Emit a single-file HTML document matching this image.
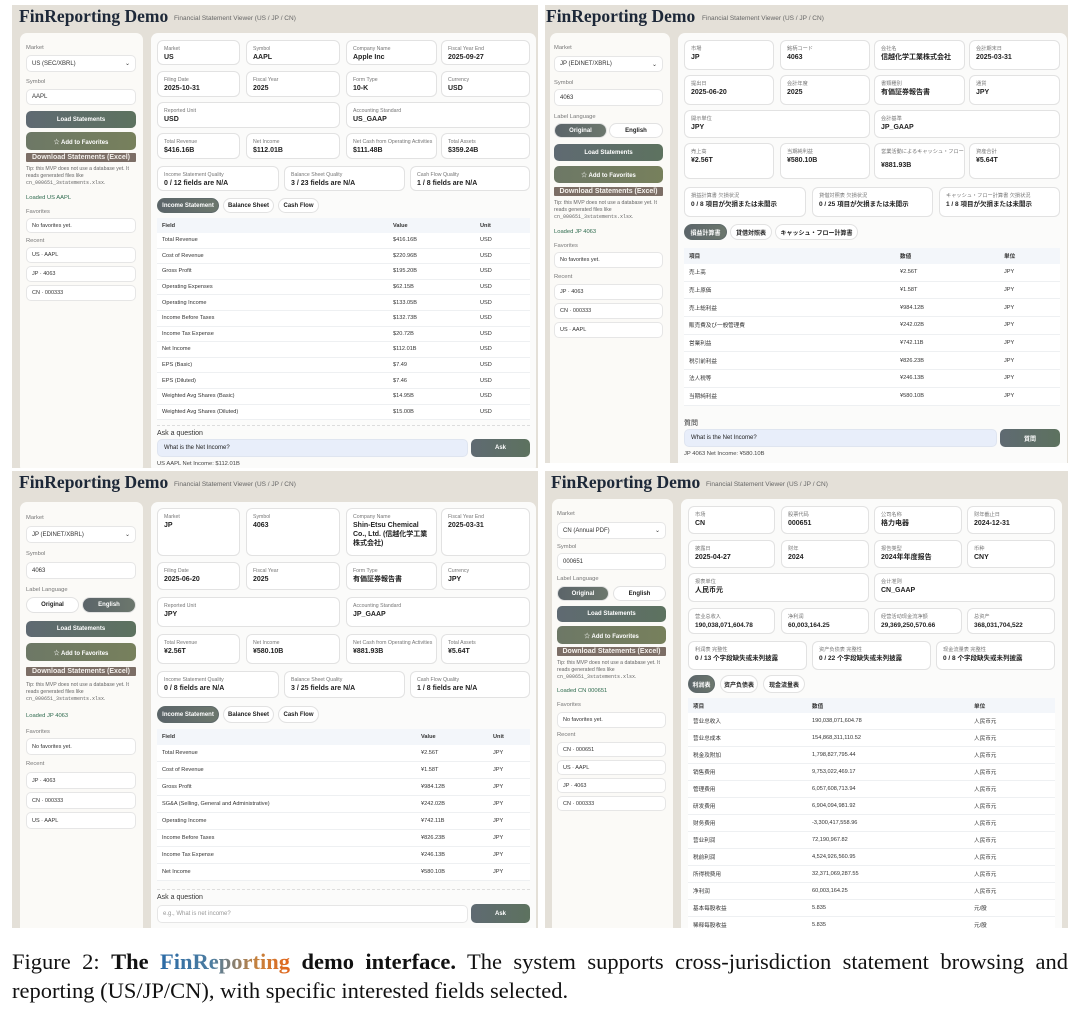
<!DOCTYPE html>
<html><head><meta charset="utf-8"><style>
*{box-sizing:border-box;margin:0;padding:0}
body{width:1080px;height:1010px;background:#fff;position:relative;overflow:hidden;font-family:"Liberation Sans","Noto Sans CJK JP",sans-serif;color:#222}
.w{position:absolute;left:0;top:0;width:1080px;height:1010px}
.w div,.w span.a{position:absolute}
.bg{background:#e4e0d8}
.ti{font-family:"Liberation Serif",serif;font-weight:bold;font-size:17.5px;color:#1d2838;white-space:nowrap}
.st{font-size:6.5px;color:#666;white-space:nowrap}
.sb{background:#fbfaf7;border-radius:7px}
.mn{background:#fbfbfa;border-radius:7px}
.lb{font-size:5.8px;color:#777;white-space:nowrap}
.in{background:#fff;border:1px solid #e6e6e6;border-radius:5px;font-size:6px;padding-left:5px;display:flex;align-items:center;color:#333}
.btn{border-radius:5px;color:#fff;font-weight:bold;font-size:6px;display:flex;align-items:center;justify-content:center;background:linear-gradient(90deg,#5f6a72,#5d725f)}
.fav{background:linear-gradient(90deg,#6d7866,#77805c)}
.dl{background:#7c6e66;color:#f4f0ec;font-weight:bold;font-size:7px;display:flex;align-items:center;justify-content:center;border-radius:1px}
.tip{font-size:5.2px;color:#666;line-height:7px}
.tip code{font-family:"Liberation Mono",monospace;font-size:5px}
.ok{font-size:5.8px;color:#2f6b4f;white-space:nowrap}
.c{background:#fff;border:1px solid #e2e2e2;border-radius:6px;padding:4px 6px}
.c i{display:block;font-style:normal;font-size:5.2px;color:#777;line-height:8px;white-space:nowrap}
.c b{display:block;font-size:7px;color:#222;line-height:9px}
.tab{border:1px solid #e2e2e2;border-radius:9px;background:#fff;font-size:6px;font-weight:bold;display:flex;align-items:center;justify-content:center;white-space:nowrap}
.tab.on{background:linear-gradient(90deg,#5b6469,#6c776d);color:#fff;border-color:#5f6a6a}
.tg{border:1px solid #e2e2e2;border-radius:9px;background:#fff;font-size:6px;font-weight:bold;display:flex;align-items:center;justify-content:center}
.tg.on{background:linear-gradient(90deg,#5b6469,#6c776d);color:#fff}
.tb .r{position:relative!important;display:grid;border-bottom:1px solid #eef0f2;font-size:5.6px;color:#333;align-items:center;padding-left:5px;background:#fff}
.tb .h{background:#f3f6fa;font-weight:bold;border-bottom:none}
.ask{background:#e8eefa;border:1px solid #dfe5f0;border-radius:5px;font-size:6px;padding-left:6px;display:flex;align-items:center}
.cap{font-family:"Liberation Serif",serif;font-size:22.5px;color:#111;line-height:29px;position:absolute;left:12px;width:1056px;white-space:nowrap}
.j{text-align:justify;text-align-last:justify;white-space:normal}
.fr{font-weight:bold;background:linear-gradient(90deg,#2a6aa6 0%,#4d7da0 40%,#c7813c 75%,#e2661c 100%);-webkit-background-clip:text;background-clip:text;color:transparent}
</style></head><body>

<!-- ============ TOP LEFT (US) ============ -->
<div class="w" style="clip-path:inset(5px 542px 542px 12px)">
<div class="bg" style="left:12px;top:5px;width:526px;height:463px"></div>
<div class="ti" style="left:19px;top:6px">FinReporting Demo</div>
<div class="st" style="left:174px;top:15px">Financial Statement Viewer (US / JP / CN)</div>
<div class="sb" style="left:20px;top:33px;width:123px;height:440px"></div>
<div class="lb" style="left:26px;top:45px">Market</div>
<div class="in" style="left:26px;top:55px;width:110px;height:17px">US (SEC/XBRL)<span style="position:absolute;right:5px;font-size:6px">&#8964;</span></div>
<div class="lb" style="left:26px;top:79px">Symbol</div>
<div class="in" style="left:26px;top:89px;width:110px;height:16px">AAPL</div>
<div class="btn" style="left:26px;top:111px;width:110px;height:17px">Load Statements</div>
<div class="btn fav" style="left:26px;top:132px;width:110px;height:18px">☆ Add to Favorites</div>
<div class="dl" style="left:26px;top:153px;width:110px;height:9px">Download Statements (Excel)</div>
<div class="tip" style="left:26px;top:166px;width:112px">Tip: this MVP does not use a database yet. It reads generated files like <code>cn_000651_3statements.xlsx</code>.</div>
<div class="ok" style="left:26px;top:195px">Loaded US AAPL</div>
<div class="lb" style="left:26px;top:209px">Favorites</div>
<div class="in" style="left:26px;top:218px;width:110px;height:15px;font-size:5.5px">No favorites yet.</div>
<div class="lb" style="left:26px;top:238px">Recent</div>
<div class="in" style="left:26px;top:247px;width:110px;height:16px;font-size:5.5px">US · AAPL</div>
<div class="in" style="left:26px;top:266px;width:110px;height:16px;font-size:5.5px">JP · 4063</div>
<div class="in" style="left:26px;top:285px;width:110px;height:16px;font-size:5.5px">CN · 000333</div>

<div class="mn" style="left:151px;top:33px;width:385px;height:440px"></div>
<div class="c" style="left:157px;top:40px;width:83px;height:25px"><i>Market</i><b>US</b></div>
<div class="c" style="left:246px;top:40px;width:94px;height:25px"><i>Symbol</i><b>AAPL</b></div>
<div class="c" style="left:346px;top:40px;width:91px;height:25px"><i>Company Name</i><b>Apple Inc</b></div>
<div class="c" style="left:441px;top:40px;width:89px;height:25px"><i>Fiscal Year End</i><b>2025-09-27</b></div>
<div class="c" style="left:157px;top:71px;width:83px;height:26px"><i>Filing Date</i><b>2025-10-31</b></div>
<div class="c" style="left:246px;top:71px;width:94px;height:26px"><i>Fiscal Year</i><b>2025</b></div>
<div class="c" style="left:346px;top:71px;width:91px;height:26px"><i>Form Type</i><b>10-K</b></div>
<div class="c" style="left:441px;top:71px;width:89px;height:26px"><i>Currency</i><b>USD</b></div>
<div class="c" style="left:157px;top:102px;width:183px;height:26px"><i>Reported Unit</i><b>USD</b></div>
<div class="c" style="left:346px;top:102px;width:184px;height:26px"><i>Accounting Standard</i><b>US_GAAP</b></div>
<div class="c" style="left:157px;top:133px;width:83px;height:26px"><i>Total Revenue</i><b>$416.16B</b></div>
<div class="c" style="left:246px;top:133px;width:94px;height:26px"><i>Net Income</i><b>$112.01B</b></div>
<div class="c" style="left:346px;top:133px;width:91px;height:26px"><i>Net Cash from Operating Activities</i><b>$111.48B</b></div>
<div class="c" style="left:441px;top:133px;width:89px;height:26px"><i>Total Assets</i><b>$359.24B</b></div>
<div class="c" style="left:157px;top:166px;width:122px;height:25px"><i>Income Statement Quality</i><b>0 / 12 fields are N/A</b></div>
<div class="c" style="left:284px;top:166px;width:121px;height:25px"><i>Balance Sheet Quality</i><b>3 / 23 fields are N/A</b></div>
<div class="c" style="left:410px;top:166px;width:120px;height:25px"><i>Cash Flow Quality</i><b>1 / 8 fields are N/A</b></div>
<div class="tab on" style="left:157px;top:198px;width:62px;height:15px">Income Statement</div>
<div class="tab" style="left:223px;top:198px;width:51px;height:15px">Balance Sheet</div>
<div class="tab" style="left:278px;top:198px;width:41px;height:15px">Cash Flow</div>
<div class="tb" style="left:157px;top:218px;width:373px">
<div class="r h" style="grid-template-columns:231px 87px 1fr;height:15px"><span>Field</span><span>Value</span><span>Unit</span></div>
<div class="r" style="grid-template-columns:231px 87px 1fr;height:15.6px"><span>Total Revenue</span><span>$416.16B</span><span>USD</span></div>
<div class="r" style="grid-template-columns:231px 87px 1fr;height:15.6px"><span>Cost of Revenue</span><span>$220.96B</span><span>USD</span></div>
<div class="r" style="grid-template-columns:231px 87px 1fr;height:15.6px"><span>Gross Profit</span><span>$195.20B</span><span>USD</span></div>
<div class="r" style="grid-template-columns:231px 87px 1fr;height:15.6px"><span>Operating Expenses</span><span>$62.15B</span><span>USD</span></div>
<div class="r" style="grid-template-columns:231px 87px 1fr;height:15.6px"><span>Operating Income</span><span>$133.05B</span><span>USD</span></div>
<div class="r" style="grid-template-columns:231px 87px 1fr;height:15.6px"><span>Income Before Taxes</span><span>$132.73B</span><span>USD</span></div>
<div class="r" style="grid-template-columns:231px 87px 1fr;height:15.6px"><span>Income Tax Expense</span><span>$20.72B</span><span>USD</span></div>
<div class="r" style="grid-template-columns:231px 87px 1fr;height:15.6px"><span>Net Income</span><span>$112.01B</span><span>USD</span></div>
<div class="r" style="grid-template-columns:231px 87px 1fr;height:15.6px"><span>EPS (Basic)</span><span>$7.49</span><span>USD</span></div>
<div class="r" style="grid-template-columns:231px 87px 1fr;height:15.6px"><span>EPS (Diluted)</span><span>$7.46</span><span>USD</span></div>
<div class="r" style="grid-template-columns:231px 87px 1fr;height:15.6px"><span>Weighted Avg Shares (Basic)</span><span>$14.95B</span><span>USD</span></div>
<div class="r" style="grid-template-columns:231px 87px 1fr;height:15.6px"><span>Weighted Avg Shares (Diluted)</span><span>$15.00B</span><span>USD</span></div>
</div>
<div style="left:157px;top:425px;width:373px;border-top:1px dashed #ddd"></div>
<div style="left:157px;top:430px;font-size:7px;color:#333">Ask a question</div>
<div class="ask" style="left:157px;top:439px;width:311px;height:18px">What is the Net Income?</div>
<div class="btn" style="left:471px;top:439px;width:59px;height:18px">Ask</div>
<div class="lb" style="left:157px;top:461px;color:#444">US AAPL Net Income: $112.01B</div>
</div>

<!-- ============ TOP RIGHT (JP) ============ -->
<div class="w" style="clip-path:inset(5px 12px 547px 545px)">
<div class="bg" style="left:545px;top:5px;width:523px;height:458px"></div>
<div class="ti" style="left:546px;top:6px">FinReporting Demo</div>
<div class="st" style="left:702px;top:15px">Financial Statement Viewer (US / JP / CN)</div>
<div class="sb" style="left:550px;top:33px;width:120px;height:440px"></div>
<div class="lb" style="left:554px;top:45px">Market</div>
<div class="in" style="left:554px;top:56px;width:109px;height:16px">JP (EDINET/XBRL)<span style="position:absolute;right:5px">&#8964;</span></div>
<div class="lb" style="left:554px;top:80px">Symbol</div>
<div class="in" style="left:554px;top:89px;width:109px;height:17px">4063</div>
<div class="lb" style="left:554px;top:114px">Label Language</div>
<div class="tg on" style="left:554px;top:123px;width:53px;height:15px">Original</div>
<div class="tg" style="left:609px;top:123px;width:54px;height:15px">English</div>
<div class="btn" style="left:554px;top:144px;width:109px;height:17px">Load Statements</div>
<div class="btn fav" style="left:554px;top:166px;width:109px;height:17px">☆ Add to Favorites</div>
<div class="dl" style="left:554px;top:187px;width:109px;height:9px">Download Statements (Excel)</div>
<div class="tip" style="left:554px;top:200px;width:112px">Tip: this MVP does not use a database yet. It reads generated files like <code>cn_000651_3statements.xlsx</code>.</div>
<div class="ok" style="left:554px;top:229px">Loaded JP 4063</div>
<div class="lb" style="left:554px;top:243px">Favorites</div>
<div class="in" style="left:554px;top:252px;width:109px;height:16px;font-size:5.5px">No favorites yet.</div>
<div class="lb" style="left:554px;top:274px">Recent</div>
<div class="in" style="left:554px;top:284px;width:109px;height:16px;font-size:5.5px">JP · 4063</div>
<div class="in" style="left:554px;top:303px;width:109px;height:16px;font-size:5.5px">CN · 000333</div>
<div class="in" style="left:554px;top:322px;width:109px;height:16px;font-size:5.5px">US · AAPL</div>

<div class="mn" style="left:678px;top:33px;width:389px;height:440px"></div>
<div class="c" style="left:684px;top:40px;width:90px;height:30px"><i>市場</i><b>JP</b></div>
<div class="c" style="left:780px;top:40px;width:90px;height:30px"><i>銘柄コード</i><b>4063</b></div>
<div class="c" style="left:874px;top:40px;width:91px;height:30px"><i>会社名</i><b>信越化学工業株式会社</b></div>
<div class="c" style="left:969px;top:40px;width:91px;height:30px"><i>会計期末日</i><b>2025-03-31</b></div>
<div class="c" style="left:684px;top:75px;width:90px;height:30px"><i>提出日</i><b>2025-06-20</b></div>
<div class="c" style="left:780px;top:75px;width:90px;height:30px"><i>会計年度</i><b>2025</b></div>
<div class="c" style="left:874px;top:75px;width:91px;height:30px"><i>書類種別</i><b>有価証券報告書</b></div>
<div class="c" style="left:969px;top:75px;width:91px;height:30px"><i>通貨</i><b>JPY</b></div>
<div class="c" style="left:684px;top:110px;width:186px;height:28px"><i>開示単位</i><b>JPY</b></div>
<div class="c" style="left:874px;top:110px;width:186px;height:28px"><i>会計基準</i><b>JP_GAAP</b></div>
<div class="c" style="left:684px;top:143px;width:90px;height:36px"><i>売上高</i><b>¥2.56T</b></div>
<div class="c" style="left:780px;top:143px;width:90px;height:36px"><i>当期純利益</i><b>¥580.10B</b></div>
<div class="c" style="left:874px;top:143px;width:91px;height:36px"><i>営業活動によるキャッシュ・フロー</i><b style="margin-top:5px">¥881.93B</b></div>
<div class="c" style="left:969px;top:143px;width:91px;height:36px"><i>資産合計</i><b>¥5.64T</b></div>
<div class="c" style="left:684px;top:187px;width:122px;height:30px"><i>損益計算書 欠損状況</i><b style="font-size:6.5px">0 / 8 項目が欠損または未開示</b></div>
<div class="c" style="left:812px;top:187px;width:121px;height:30px"><i>貸借対照表 欠損状況</i><b style="font-size:6.5px">0 / 25 項目が欠損または未開示</b></div>
<div class="c" style="left:939px;top:187px;width:121px;height:30px"><i>キャッシュ・フロー計算書 欠損状況</i><b style="font-size:6.5px">1 / 8 項目が欠損または未開示</b></div>
<div class="tab on" style="left:684px;top:224px;width:43px;height:16px">損益計算書</div>
<div class="tab" style="left:730px;top:224px;width:42px;height:16px">貸借対照表</div>
<div class="tab" style="left:775px;top:224px;width:83px;height:16px">キャッシュ・フロー計算書</div>
<div class="tb" style="left:684px;top:248px;width:376px">
<div class="r h" style="grid-template-columns:211px 104px 1fr;height:16px"><span>項目</span><span>数値</span><span>単位</span></div>
<div class="r" style="grid-template-columns:211px 104px 1fr;height:17.7px"><span>売上高</span><span>¥2.56T</span><span>JPY</span></div>
<div class="r" style="grid-template-columns:211px 104px 1fr;height:17.7px"><span>売上原価</span><span>¥1.58T</span><span>JPY</span></div>
<div class="r" style="grid-template-columns:211px 104px 1fr;height:17.7px"><span>売上総利益</span><span>¥984.12B</span><span>JPY</span></div>
<div class="r" style="grid-template-columns:211px 104px 1fr;height:17.7px"><span>販売費及び一般管理費</span><span>¥242.02B</span><span>JPY</span></div>
<div class="r" style="grid-template-columns:211px 104px 1fr;height:17.7px"><span>営業利益</span><span>¥742.11B</span><span>JPY</span></div>
<div class="r" style="grid-template-columns:211px 104px 1fr;height:17.7px"><span>税引前利益</span><span>¥826.23B</span><span>JPY</span></div>
<div class="r" style="grid-template-columns:211px 104px 1fr;height:17.7px"><span>法人税等</span><span>¥246.13B</span><span>JPY</span></div>
<div class="r" style="grid-template-columns:211px 104px 1fr;height:17.7px"><span>当期純利益</span><span>¥580.10B</span><span>JPY</span></div>
</div>
<div style="left:684px;top:418px;font-size:7px;color:#333">質問</div>
<div class="ask" style="left:684px;top:429px;width:313px;height:18px">What is the Net Income?</div>
<div class="btn" style="left:1000px;top:429px;width:60px;height:18px">質問</div>
<div class="lb" style="left:684px;top:451px;color:#444">JP 4063 Net Income: ¥580.10B</div>
</div>

<!-- ============ BOTTOM LEFT (JP English) ============ -->
<div class="w" style="clip-path:inset(471px 542px 82px 12px)">
<div class="bg" style="left:12px;top:471px;width:526px;height:457px"></div>
<div class="ti" style="left:19px;top:472px">FinReporting Demo</div>
<div class="st" style="left:174px;top:481px">Financial Statement Viewer (US / JP / CN)</div>
<div class="sb" style="left:20px;top:502px;width:123px;height:440px"></div>
<div class="lb" style="left:26px;top:515px">Market</div>
<div class="in" style="left:26px;top:526px;width:110px;height:17px">JP (EDINET/XBRL)<span style="position:absolute;right:5px">&#8964;</span></div>
<div class="lb" style="left:26px;top:551px">Symbol</div>
<div class="in" style="left:26px;top:562px;width:110px;height:17px">4063</div>
<div class="lb" style="left:26px;top:587px">Label Language</div>
<div class="tg" style="left:26px;top:597px;width:53px;height:16px">Original</div>
<div class="tg on" style="left:82px;top:597px;width:54px;height:16px">English</div>
<div class="btn" style="left:26px;top:621px;width:110px;height:16px">Load Statements</div>
<div class="btn fav" style="left:26px;top:643px;width:110px;height:18px">☆ Add to Favorites</div>
<div class="dl" style="left:26px;top:667px;width:110px;height:9px">Download Statements (Excel)</div>
<div class="tip" style="left:26px;top:682px;width:112px">Tip: this MVP does not use a database yet. It reads generated files like <code>cn_000651_3statements.xlsx</code>.</div>
<div class="ok" style="left:26px;top:713px">Loaded JP 4063</div>
<div class="lb" style="left:26px;top:729px">Favorites</div>
<div class="in" style="left:26px;top:738px;width:110px;height:17px;font-size:5.5px">No favorites yet.</div>
<div class="lb" style="left:26px;top:761px">Recent</div>
<div class="in" style="left:26px;top:772px;width:110px;height:17px;font-size:5.5px">JP · 4063</div>
<div class="in" style="left:26px;top:792px;width:110px;height:17px;font-size:5.5px">CN · 000333</div>
<div class="in" style="left:26px;top:812px;width:110px;height:17px;font-size:5.5px">US · AAPL</div>

<div class="mn" style="left:151px;top:502px;width:385px;height:440px"></div>
<div class="c" style="left:157px;top:508px;width:83px;height:48px"><i>Market</i><b>JP</b></div>
<div class="c" style="left:246px;top:508px;width:94px;height:48px"><i>Symbol</i><b>4063</b></div>
<div class="c" style="left:346px;top:508px;width:91px;height:48px"><i>Company Name</i><b>Shin-Etsu Chemical Co., Ltd. (信越化学工業株式会社)</b></div>
<div class="c" style="left:441px;top:508px;width:89px;height:48px"><i>Fiscal Year End</i><b>2025-03-31</b></div>
<div class="c" style="left:157px;top:562px;width:83px;height:28px"><i>Filing Date</i><b>2025-06-20</b></div>
<div class="c" style="left:246px;top:562px;width:94px;height:28px"><i>Fiscal Year</i><b>2025</b></div>
<div class="c" style="left:346px;top:562px;width:91px;height:28px"><i>Form Type</i><b>有価証券報告書</b></div>
<div class="c" style="left:441px;top:562px;width:89px;height:28px"><i>Currency</i><b>JPY</b></div>
<div class="c" style="left:157px;top:597px;width:183px;height:30px"><i>Reported Unit</i><b>JPY</b></div>
<div class="c" style="left:346px;top:597px;width:184px;height:30px"><i>Accounting Standard</i><b>JP_GAAP</b></div>
<div class="c" style="left:157px;top:634px;width:83px;height:30px"><i>Total Revenue</i><b>¥2.56T</b></div>
<div class="c" style="left:246px;top:634px;width:94px;height:30px"><i>Net Income</i><b>¥580.10B</b></div>
<div class="c" style="left:346px;top:634px;width:91px;height:30px"><i>Net Cash from Operating Activities</i><b>¥881.93B</b></div>
<div class="c" style="left:441px;top:634px;width:89px;height:30px"><i>Total Assets</i><b>¥5.64T</b></div>
<div class="c" style="left:157px;top:671px;width:122px;height:27px"><i>Income Statement Quality</i><b>0 / 8 fields are N/A</b></div>
<div class="c" style="left:284px;top:671px;width:121px;height:27px"><i>Balance Sheet Quality</i><b>3 / 25 fields are N/A</b></div>
<div class="c" style="left:410px;top:671px;width:120px;height:27px"><i>Cash Flow Quality</i><b>1 / 8 fields are N/A</b></div>
<div class="tab on" style="left:157px;top:706px;width:62px;height:17px">Income Statement</div>
<div class="tab" style="left:223px;top:706px;width:51px;height:17px">Balance Sheet</div>
<div class="tab" style="left:278px;top:706px;width:41px;height:17px">Cash Flow</div>
<div class="tb" style="left:157px;top:729px;width:373px">
<div class="r h" style="grid-template-columns:259px 72px 1fr;height:16px"><span>Field</span><span>Value</span><span>Unit</span></div>
<div class="r" style="grid-template-columns:259px 72px 1fr;height:17px"><span>Total Revenue</span><span>¥2.56T</span><span>JPY</span></div>
<div class="r" style="grid-template-columns:259px 72px 1fr;height:17px"><span>Cost of Revenue</span><span>¥1.58T</span><span>JPY</span></div>
<div class="r" style="grid-template-columns:259px 72px 1fr;height:17px"><span>Gross Profit</span><span>¥984.12B</span><span>JPY</span></div>
<div class="r" style="grid-template-columns:259px 72px 1fr;height:17px"><span>SG&amp;A (Selling, General and Administrative)</span><span>¥242.02B</span><span>JPY</span></div>
<div class="r" style="grid-template-columns:259px 72px 1fr;height:17px"><span>Operating Income</span><span>¥742.11B</span><span>JPY</span></div>
<div class="r" style="grid-template-columns:259px 72px 1fr;height:17px"><span>Income Before Taxes</span><span>¥826.23B</span><span>JPY</span></div>
<div class="r" style="grid-template-columns:259px 72px 1fr;height:17px"><span>Income Tax Expense</span><span>¥246.13B</span><span>JPY</span></div>
<div class="r" style="grid-template-columns:259px 72px 1fr;height:17px"><span>Net Income</span><span>¥580.10B</span><span>JPY</span></div>
</div>
<div style="left:157px;top:889px;width:373px;border-top:1px dashed #ddd"></div>
<div style="left:157px;top:894px;font-size:7px;color:#333">Ask a question</div>
<div class="in" style="left:157px;top:905px;width:311px;height:18px;color:#999">e.g., What is net income?</div>
<div class="btn" style="left:471px;top:904px;width:59px;height:19px">Ask</div>
</div>

<!-- ============ BOTTOM RIGHT (CN) ============ -->
<div class="w" style="clip-path:inset(471px 12px 82px 545px)">
<div class="bg" style="left:545px;top:471px;width:523px;height:457px"></div>
<div class="ti" style="left:551px;top:472px">FinReporting Demo</div>
<div class="st" style="left:706px;top:481px">Financial Statement Viewer (US / JP / CN)</div>
<div class="sb" style="left:552px;top:499px;width:121px;height:440px"></div>
<div class="lb" style="left:557px;top:511px">Market</div>
<div class="in" style="left:557px;top:522px;width:109px;height:17px">CN (Annual PDF)<span style="position:absolute;right:5px">&#8964;</span></div>
<div class="lb" style="left:557px;top:544px">Symbol</div>
<div class="in" style="left:557px;top:553px;width:109px;height:17px">000651</div>
<div class="lb" style="left:557px;top:576px">Label Language</div>
<div class="tg on" style="left:557px;top:586px;width:52px;height:15px">Original</div>
<div class="tg" style="left:613px;top:586px;width:53px;height:15px">English</div>
<div class="btn" style="left:557px;top:606px;width:109px;height:16px">Load Statements</div>
<div class="btn fav" style="left:557px;top:626px;width:109px;height:18px">☆ Add to Favorites</div>
<div class="dl" style="left:557px;top:647px;width:109px;height:9px">Download Statements (Excel)</div>
<div class="tip" style="left:557px;top:660px;width:112px">Tip: this MVP does not use a database yet. It reads generated files like <code>cn_000651_3statements.xlsx</code>.</div>
<div class="ok" style="left:557px;top:688px">Loaded CN 000651</div>
<div class="lb" style="left:557px;top:702px">Favorites</div>
<div class="in" style="left:557px;top:712px;width:109px;height:16px;font-size:5.5px">No favorites yet.</div>
<div class="lb" style="left:557px;top:732px">Recent</div>
<div class="in" style="left:557px;top:742px;width:109px;height:15px;font-size:5.5px">CN · 000651</div>
<div class="in" style="left:557px;top:760px;width:109px;height:15px;font-size:5.5px">US · AAPL</div>
<div class="in" style="left:557px;top:778px;width:109px;height:15px;font-size:5.5px">JP · 4063</div>
<div class="in" style="left:557px;top:796px;width:109px;height:15px;font-size:5.5px">CN · 000333</div>

<div class="mn" style="left:681px;top:499px;width:381px;height:440px"></div>
<div class="c" style="left:688px;top:506px;width:87px;height:28px"><i>市场</i><b>CN</b></div>
<div class="c" style="left:781px;top:506px;width:88px;height:28px"><i>股票代码</i><b>000651</b></div>
<div class="c" style="left:874px;top:506px;width:88px;height:28px"><i>公司名称</i><b>格力电器</b></div>
<div class="c" style="left:967px;top:506px;width:88px;height:28px"><i>财年截止日</i><b>2024-12-31</b></div>
<div class="c" style="left:688px;top:540px;width:87px;height:28px"><i>披露日</i><b>2025-04-27</b></div>
<div class="c" style="left:781px;top:540px;width:88px;height:28px"><i>财年</i><b>2024</b></div>
<div class="c" style="left:874px;top:540px;width:88px;height:28px"><i>报告类型</i><b>2024年年度报告</b></div>
<div class="c" style="left:967px;top:540px;width:88px;height:28px"><i>币种</i><b>CNY</b></div>
<div class="c" style="left:688px;top:573px;width:181px;height:29px"><i>报表单位</i><b>人民币元</b></div>
<div class="c" style="left:874px;top:573px;width:181px;height:29px"><i>会计准则</i><b>CN_GAAP</b></div>
<div class="c" style="left:688px;top:608px;width:87px;height:26px"><i>营业总收入</i><b style="font-size:6.5px">190,038,071,604.78</b></div>
<div class="c" style="left:781px;top:608px;width:88px;height:26px"><i>净利润</i><b style="font-size:6.5px">60,003,164.25</b></div>
<div class="c" style="left:874px;top:608px;width:88px;height:26px"><i>经营活动现金流净额</i><b style="font-size:6.5px">29,369,250,570.66</b></div>
<div class="c" style="left:967px;top:608px;width:88px;height:26px"><i>总资产</i><b style="font-size:6.5px">368,031,704,522</b></div>
<div class="c" style="left:688px;top:641px;width:119px;height:29px"><i>利润表 完整性</i><b style="font-size:6.5px">0 / 13 个字段缺失或未列披露</b></div>
<div class="c" style="left:812px;top:641px;width:119px;height:29px"><i>资产负债表 完整性</i><b style="font-size:6.5px">0 / 22 个字段缺失或未列披露</b></div>
<div class="c" style="left:936px;top:641px;width:119px;height:29px"><i>现金流量表 完整性</i><b style="font-size:6.5px">0 / 8 个字段缺失或未列披露</b></div>
<div class="tab on" style="left:688px;top:675px;width:27px;height:18px">利润表</div>
<div class="tab" style="left:720px;top:675px;width:38px;height:18px">资产负债表</div>
<div class="tab" style="left:763px;top:675px;width:42px;height:18px">现金流量表</div>
<div class="tb" style="left:688px;top:698px;width:367px">
<div class="r h" style="grid-template-columns:119px 162px 1fr;height:15px"><span>项目</span><span>数值</span><span>单位</span></div>
<div class="r" style="grid-template-columns:119px 162px 1fr;height:17px"><span>营业总收入</span><span>190,038,071,604.78</span><span>人民币元</span></div>
<div class="r" style="grid-template-columns:119px 162px 1fr;height:17px"><span>营业总成本</span><span>154,868,311,110.52</span><span>人民币元</span></div>
<div class="r" style="grid-template-columns:119px 162px 1fr;height:17px"><span>税金及附加</span><span>1,798,827,795.44</span><span>人民币元</span></div>
<div class="r" style="grid-template-columns:119px 162px 1fr;height:17px"><span>销售费用</span><span>9,753,022,469.17</span><span>人民币元</span></div>
<div class="r" style="grid-template-columns:119px 162px 1fr;height:17px"><span>管理费用</span><span>6,057,608,713.94</span><span>人民币元</span></div>
<div class="r" style="grid-template-columns:119px 162px 1fr;height:17px"><span>研发费用</span><span>6,904,094,981.92</span><span>人民币元</span></div>
<div class="r" style="grid-template-columns:119px 162px 1fr;height:17px"><span>财务费用</span><span>-3,300,417,558.96</span><span>人民币元</span></div>
<div class="r" style="grid-template-columns:119px 162px 1fr;height:17px"><span>营业利润</span><span>72,190,967.82</span><span>人民币元</span></div>
<div class="r" style="grid-template-columns:119px 162px 1fr;height:17px"><span>税前利润</span><span>4,524,926,560.95</span><span>人民币元</span></div>
<div class="r" style="grid-template-columns:119px 162px 1fr;height:17px"><span>所得税费用</span><span>32,371,069,287.55</span><span>人民币元</span></div>
<div class="r" style="grid-template-columns:119px 162px 1fr;height:17px"><span>净利润</span><span>60,003,164.25</span><span>人民币元</span></div>
<div class="r" style="grid-template-columns:119px 162px 1fr;height:17px"><span>基本每股收益</span><span>5.835</span><span>元/股</span></div>
<div class="r" style="grid-template-columns:119px 162px 1fr;height:17px"><span>稀释每股收益</span><span>5.835</span><span>元/股</span></div>
</div>
</div>

<!-- ============ CAPTION ============ -->
<div class="cap j" style="top:947px">Figure 2: <b>The <span class="fr">FinReporting</span> demo interface.</b> The system supports cross-jurisdiction statement browsing and</div>
<div class="cap" style="top:976px">reporting (US/JP/CN), with specific interested fields selected.</div>
</body></html>
